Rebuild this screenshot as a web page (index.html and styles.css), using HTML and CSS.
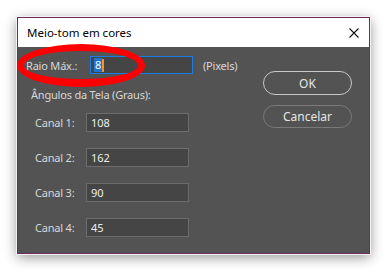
FILE: index.html
```html
<!DOCTYPE html>
<html lang="pt">
<head>
<meta charset="utf-8">
<title>Meio-tom em cores</title>
<link rel="stylesheet" href="styles.css">
</head>
<body>
<div class="dialog">
  <div class="titlebar">
    <span class="title">Meio-tom em cores</span>
    <svg class="close" width="10" height="10" viewBox="0 0 10 10" aria-label="Fechar">
      <path d="M0.5 0.5 L9.5 9.5 M9.5 0.5 L0.5 9.5" stroke="#111" stroke-width="1.1" fill="none"/>
    </svg>
  </div>
  <div class="body">
    <div class="form">
      <div class="row-main">
        <span class="label-main">Raio Máx.:</span>
        <div class="field active"><span class="sel">8</span><span class="caret"></span></div>
        <span class="unit">(Pixels)</span>
      </div>
      <div class="heading">Ângulos da Tela (Graus):</div>
      <div class="channels">
        <div class="row"><span class="label">Canal 1:</span><div class="field">108</div></div>
        <div class="row"><span class="label">Canal 2:</span><div class="field">162</div></div>
        <div class="row"><span class="label">Canal 3:</span><div class="field">90</div></div>
        <div class="row"><span class="label">Canal 4:</span><div class="field">45</div></div>
      </div>
    </div>
    <div class="buttons">
      <div class="btn primary">OK</div>
      <div class="btn">Cancelar</div>
    </div>
  </div>
  <div class="mark"></div>
</div>
</body>
</html>
```
FILE: styles.css
```css
html, body {
  margin: 0;
  padding: 0;
  background: #ffffff;
}
body {
  width: 387px;
  height: 270px;
  overflow: hidden;
  font-family: "Noto Sans", "Liberation Sans", sans-serif;
}
.dialog {
  position: relative;
  margin: 17px 0 0 17px;
  width: 351px;
  height: 235px;
  border: 1px solid #6e2d5a;
  box-shadow: 0 0 0 1px #f2f2f2, 0 3px 12px rgba(0,0,0,0.45);
  background: #535353;
  display: flex;
  flex-direction: column;
}
.titlebar {
  height: 29px;
  background: #ffffff;
  display: flex;
  align-items: center;
  justify-content: space-between;
  padding: 0 10px 0 9px;
}
.title {
  font-size: 11.5px;
  color: #000;
  line-height: 14px;
}
.close {
  display: block;
}
.body {
  flex: 1;
  display: flex;
  justify-content: space-between;
  padding: 9px 17px 0 8px;
  color: #d8d8d8;
  font-size: 11px;
  letter-spacing: -0.2px;
}
.row-main {
  display: flex;
  align-items: center;
  height: 18px;
}
.label-main {
  width: 64px;
}
.field {
  box-sizing: border-box;
  width: 103px;
  height: 19px;
  background: #454545;
  border: 1px solid #6c6c6c;
  color: #ececec;
  font-size: 11px;
  line-height: 17px;
  padding-left: 4px;
  display: flex;
  align-items: center;
  letter-spacing: 0;
}
.field.active {
  height: 18px;
  border-color: #1b7be4;
  padding-left: 3px;
}
.sel {
  background: #1e74d6;
  color: #fff;
  line-height: 14px;
  padding: 0 1px;
}
.caret {
  width: 2px;
  height: 13px;
  background: #f5941e;
}
.unit {
  margin-left: 10px;
}
.heading {
  margin-top: 14px;
  padding-left: 5px;
  line-height: 14px;
}
.channels {
  margin-top: 11px;
  padding-left: 9px;
  display: flex;
  flex-direction: column;
  gap: 16px;
}
.row {
  display: flex;
  align-items: center;
}
.label {
  width: 51px;
}
.buttons {
  padding-top: 15px;
  display: flex;
  flex-direction: column;
  gap: 10px;
}
.btn {
  box-sizing: border-box;
  width: 89px;
  height: 23px;
  border: 1px solid #7a7a7a;
  border-radius: 12px;
  display: flex;
  align-items: center;
  justify-content: center;
  font-size: 12px;
  letter-spacing: 0;
  color: #e6e6e6;
}
.btn.primary {
  height: 24px;
  border: 1.5px solid #c8c8c8;
}
.mark {
  position: absolute;
  left: -1px;
  top: 26px;
  width: 114px;
  height: 28px;
  border-style: solid;
  border-color: #ff0000;
  border-width: 7px 7px 8px 7px;
  border-radius: 50%;
  pointer-events: none;
}
```
